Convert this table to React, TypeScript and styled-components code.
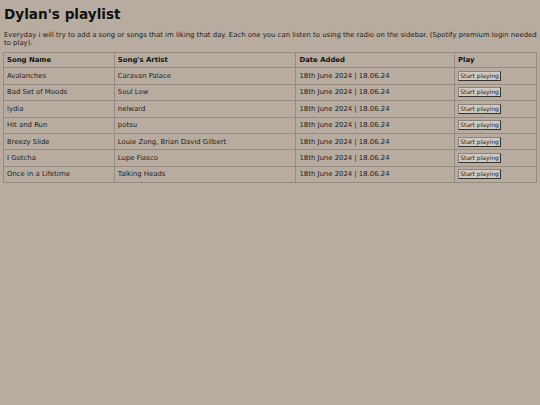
import React from "react";
import styled, { createGlobalStyle } from "styled-components";

const Global = createGlobalStyle`
  html, body { margin: 0; padding: 0; background: #b8aca0; }
  body { padding: 3px; font-family: "DejaVu Sans", Verdana, sans-serif; color: #111; }
`;

const Title = styled.h1`
  margin: 3px 0 0 1px;
  font-size: 13.6px;
  font-weight: bold;
  line-height: 17px;
`;

const Intro = styled.p`
  margin: 8px 0 5px 1px;
  font-size: 6.9px;
  line-height: 8px;
  color: #1a1a1a;
`;

const Table = styled.table`
  width: 534px;
  border-collapse: collapse;
  font-size: 6.9px;
  border: 1px solid #968b80;
`;

const Th = styled.th<{ $w: number }>`
  width: ${(p) => p.$w}px;
  text-align: left;
  font-weight: bold;
  padding: 0 3px;
  height: 15.4px;
  border: 1px solid #968b80;
  box-sizing: border-box;
  color: #111;
`;

const Td = styled.td`
  padding: 0 3px;
  height: 15.4px;
  border: 1px solid #968b80;
  color: #222;
  vertical-align: middle;
`;

const PlayButton = styled.button`
  font-family: "DejaVu Sans", Verdana, sans-serif;
  font-size: 6px;
  padding: 0;
  margin: 0;
  width: 43px;
  height: 10px;
  line-height: 8px;
  background: #cfc9c3;
  color: #1a1a1a;
  border: 1px solid;
  border-color: #8a827b #333 #333 #8a827b;
  display: block;
  white-space: nowrap;
  text-align: center;
`;

const songs = [
  ["Avalanches", "Caravan Palace"],
  ["Bad Set of Moods", "Soul Low"],
  ["lydia", "nelward"],
  ["Hit and Run", "potsu"],
  ["Breezy Slide", "Louie Zong, Brian David Gilbert"],
  ["I Gotcha", "Lupe Fiasco"],
  ["Once in a Lifetime", "Talking Heads"],
];

export default function App() {
  return (
    <>
      <Global />
      <Title>Dylan's playlist</Title>
      <Intro>
        Everyday i will try to add a song or songs that im liking that day. Each one you can listen to using the radio on the sidebar. (Spotify premium login needed to play).
      </Intro>
      <Table>
        <thead>
          <tr>
            <Th $w={111}>Song Name</Th>
            <Th $w={182}>Song's Artist</Th>
            <Th $w={159}>Date Added</Th>
            <Th $w={82}>Play</Th>
          </tr>
        </thead>
        <tbody>
          {songs.map(([name, artist]) => (
            <tr key={name}>
              <Td>{name}</Td>
              <Td>{artist}</Td>
              <Td>18th June 2024 | 18.06.24</Td>
              <Td>
                <PlayButton>Start playing</PlayButton>
              </Td>
            </tr>
          ))}
        </tbody>
      </Table>
    </>
  );
}
